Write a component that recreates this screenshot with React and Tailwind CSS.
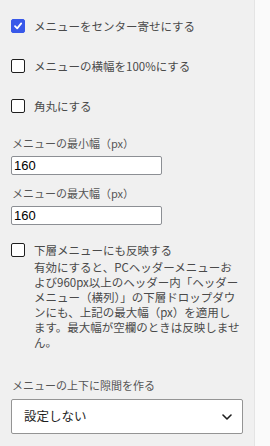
import React from 'react';

const font = { fontFamily: '"Noto Sans CJK JP", "Noto Sans", sans-serif' };

const Checkbox = ({ checked }) => (
  <span
    className={`flex h-[14px] w-[14px] shrink-0 items-center justify-center rounded-[2px] border ${
      checked ? 'border-[#3858e9] bg-[#3858e9]' : 'border-[#1e1e1e] bg-white'
    }`}
  >
    {checked && (
      <svg width="10" height="10" viewBox="0 0 10 10" fill="none">
        <path d="M2 5.2 L4.2 7.4 L8.2 2.4" stroke="white" strokeWidth="1.8" strokeLinecap="round" strokeLinejoin="round" />
      </svg>
    )}
  </span>
);

const CheckRow = ({ checked, label, className = '' }) => (
  <div className={`flex h-[14px] items-center gap-[9px] ${className}`}>
    <Checkbox checked={checked} />
    <span className="text-[11.5px] leading-[14px] text-[#4a4a4a]">{label}</span>
  </div>
);

const NumberField = ({ label, value, className = '' }) => (
  <div className={className}>
    <div className="pl-px text-[11px] leading-[14px] text-[#555]">{label}</div>
    <div
      className="mt-[6px] flex h-[19px] w-[151px] items-center rounded-[2px] border border-[#8c8f94] bg-white px-[2px] text-[13px] text-black"
      style={{ fontFamily: '"Liberation Sans", Arial, sans-serif' }}
    >
      {value}
    </div>
  </div>
);

const descLines = [
  '有効にすると、PCヘッダーメニューお',
  'よび960px以上のヘッダー内「ヘッダー',
  'メニュー（横列）」の下層ドロップダウ',
  'ンにも、上記の最大幅（px）を適用し',
  'ます。最大幅が空欄のときは反映しませ',
  'ん。',
];

export default function App() {
  return (
    <div className="flex min-h-[446px] w-[270px]" style={font}>
      <div className="w-[254px] bg-[#f0f0f0] pl-[11px] pt-[19px]">
        <CheckRow checked label="メニューをセンター寄せにする" />
        <CheckRow label="メニューの横幅を100%にする" className="mt-[26px]" />
        <CheckRow label="角丸にする" className="mt-[26px]" />

        <NumberField label="メニューの最小幅（px）" value="160" className="mt-[23px]" />
        <NumberField label="メニューの最大幅（px）" value="160" className="mt-[11px]" />

        <div className="mt-[18px]">
          <CheckRow label="下層メニューにも反映する" />
          <div className="mt-[3px] pl-[23px] text-[11.5px] leading-[15px] text-[#4a4a4a]">
            {descLines.map((line) => (
              <div key={line}>{line}</div>
            ))}
          </div>
        </div>

        <div className="mt-[28px] pl-px text-[11px] leading-[14px] text-[#555]">メニューの上下に隙間を作る</div>
        <div className="mt-[7px] flex h-[35px] w-[232px] items-center justify-between rounded-[2px] border border-[#949494] bg-white pl-[12px] pr-[10px]">
          <span className="text-[12.5px] text-[#1e1e1e]">設定しない</span>
          <svg width="10" height="6" viewBox="0 0 10 6" fill="none">
            <path d="M1 1 L5 5 L9 1" stroke="#1e1e1e" strokeWidth="1.6" strokeLinecap="round" strokeLinejoin="round" />
          </svg>
        </div>
      </div>
      <div className="w-px bg-[#e4e4e4]" />
      <div className="flex-1 bg-[#fafafa]" />
    </div>
  );
}
